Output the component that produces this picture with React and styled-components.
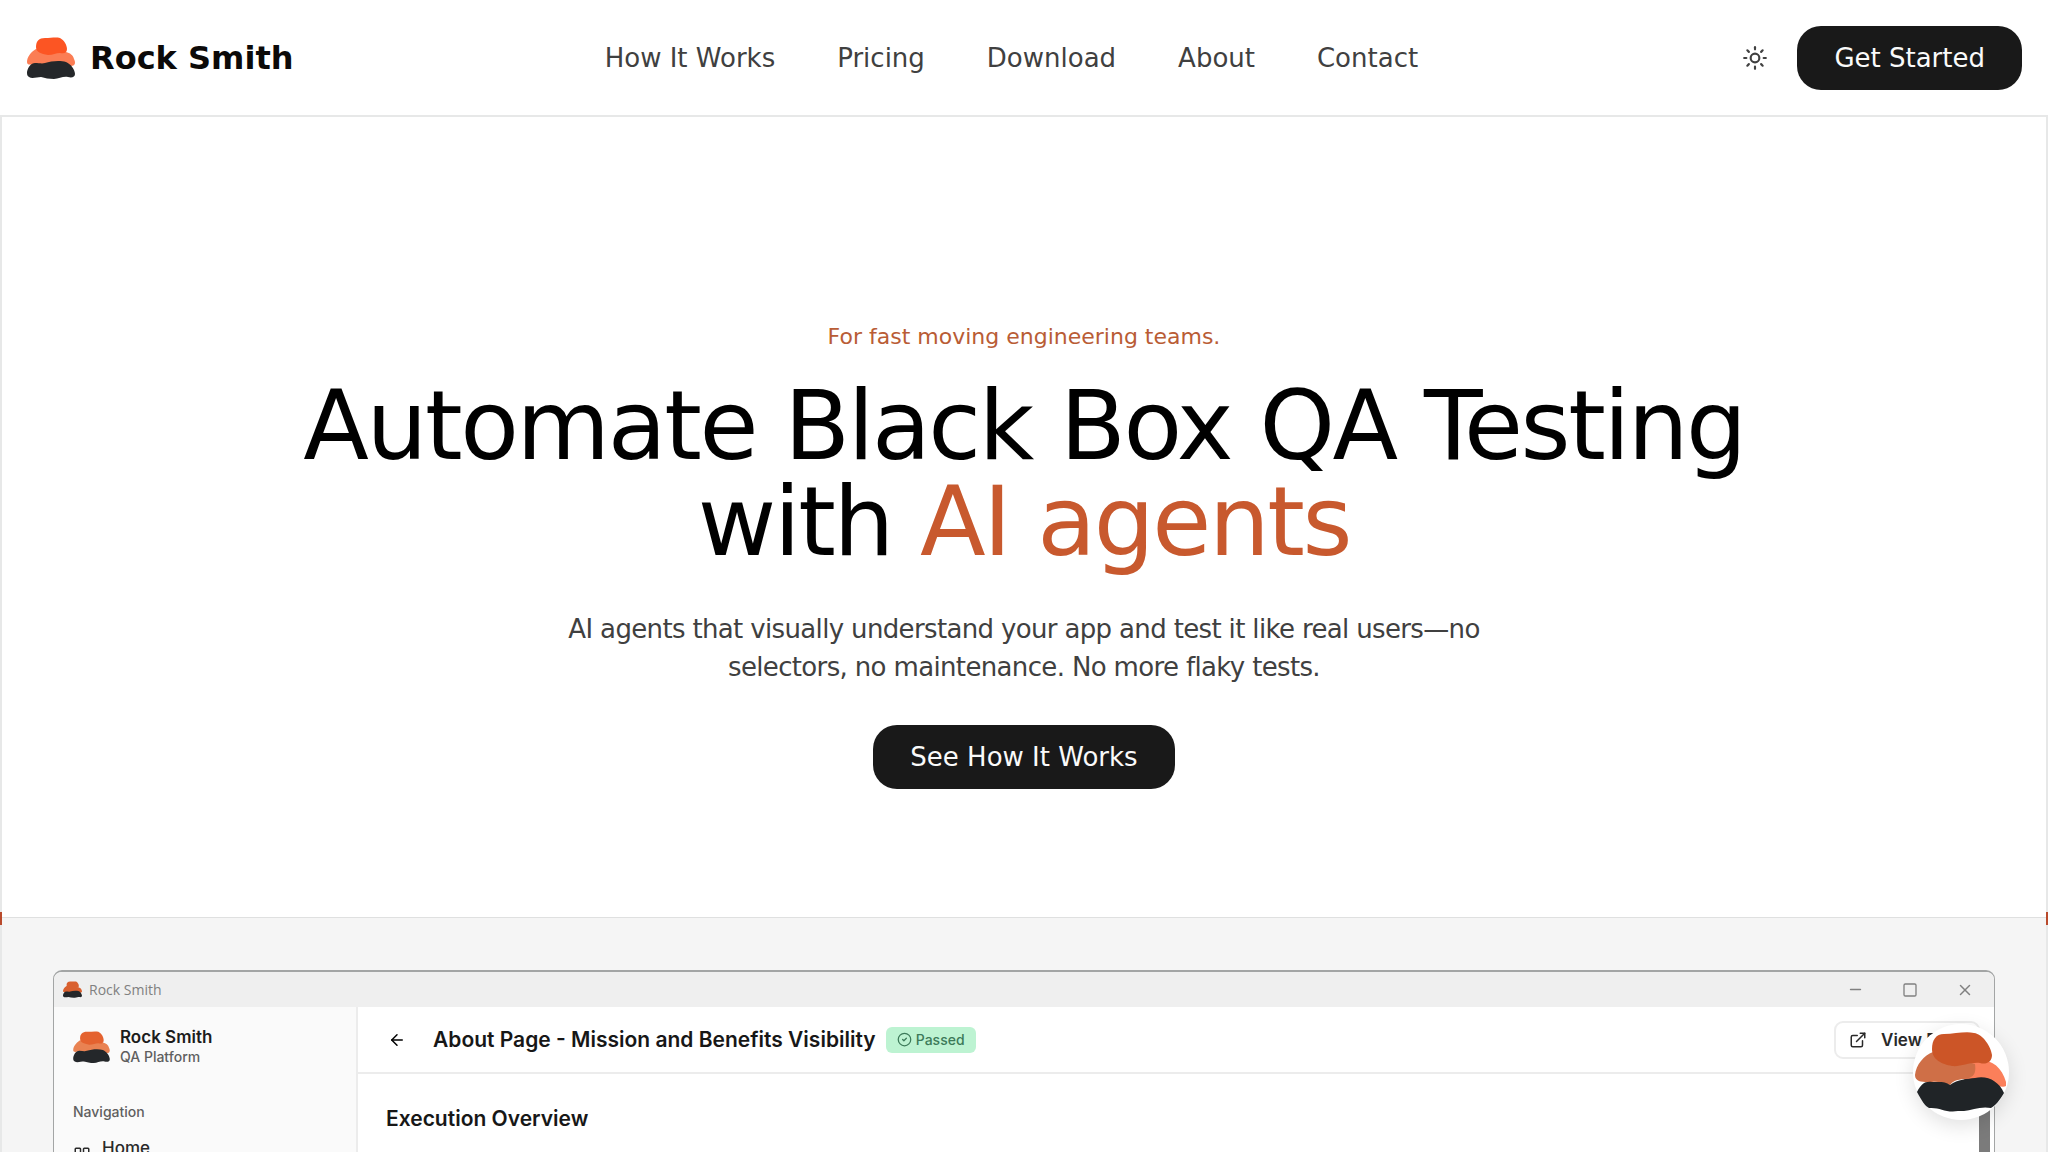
import styled, { createGlobalStyle } from 'styled-components';
import { Sun, ArrowLeft, CircleCheck, ExternalLink, LayoutGrid, Minus, Square, X } from 'lucide-react';

const GlobalStyle = createGlobalStyle`
    * {
        box-sizing: border-box;
    }

    body {
        margin: 0;
        background: #fff;
        color: #000;
        font-family: "DejaVu Sans", sans-serif;
    }

    h1, h2, p {
        margin: 0;
        font-weight: 400;
    }
`;

const Page = styled.div`
    display: flex;
    flex-direction: column;
    height: 100vh;
    overflow: hidden;
`;

const Header = styled.header`
    display: flex;
    align-items: center;
    justify-content: space-between;
    flex: none;
    height: 117px;
    padding: 0 26px;
    border-bottom: 2px solid #e7e8e8;
`;

const Brand = styled.a`
    display: flex;
    align-items: center;
    gap: 14px;
    color: #0c0a09;
    font-size: 32px;
    font-weight: 700;
    text-decoration: none;
`;

const Nav = styled.nav`
    display: flex;
    gap: 62px;
`;

const NavLink = styled.a`
    color: #404040;
    font-size: 26px;
    line-height: 38px;
    text-decoration: none;
`;

const Actions = styled.div`
    display: flex;
    align-items: center;
    gap: 16px;
`;

const IconButton = styled.button`
    display: flex;
    align-items: center;
    justify-content: center;
    width: 52px;
    height: 52px;
    padding: 0;
    border: none;
    background: none;
    color: #404040;
`;

const PrimaryButton = styled.button`
    height: 64px;
    padding: 0 37px;
    border: none;
    border-radius: 24px;
    background: #191919;
    color: #fafafa;
    font-family: inherit;
    font-size: 26px;
    line-height: 38px;
`;

const Main = styled.main`
    flex: 1;
    min-height: 0;
    border: solid #e7e8e8;
    border-width: 0 2px;
`;

const Hero = styled.section`
    display: flex;
    flex-direction: column;
    align-items: center;
    padding: 204px 32px 128px;
    text-align: center;
`;

const Eyebrow = styled.p`
    color: #b95c35;
    font-size: 22px;
    line-height: 32px;
`;

const Title = styled.h1`
    max-width: 1640px;
    margin-top: 25px;
    font-size: 96px;
    line-height: 96px;
    letter-spacing: -0.025em;
`;

const Accent = styled.span`
    color: #c8592e;
`;

const Lead = styled.p`
    max-width: 920px;
    margin: 40px 0 39px;
    color: #404040;
    font-size: 26px;
    line-height: 38px;
    letter-spacing: -0.025em;
`;

const Showcase = styled.section`
    position: relative;
    padding: 52px 51px;
    border-top: 1px solid #dfe0e0;
    background: #f5f5f5;
`;

const Tick = styled.span`
    position: absolute;
    top: -6px;
    ${({ $side }) => $side}: -2px;
    width: 2px;
    height: 13px;
    background: #b94a2c;
`;

const AppWindow = styled.div`
    overflow: hidden;
    border: 1px solid #a3a5a5;
    border-top-width: 2px;
    border-radius: 9px;
    background: #fff;
    font-family: Inter, sans-serif;
`;

const TitleBar = styled.div`
    display: flex;
    align-items: center;
    justify-content: space-between;
    height: 35px;
    padding: 0 20px 0 9px;
    background: #efefef;
    color: #808080;
`;

const WindowName = styled.div`
    display: flex;
    align-items: center;
    gap: 7px;
    font-family: "Open Sans", sans-serif;
    font-size: 14px;
`;

const WindowControls = styled.div`
    display: flex;
    align-items: center;
    gap: 38px;
`;

const AppBody = styled.div`
    display: flex;
    height: 900px;
`;

const Sidebar = styled.aside`
    flex: none;
    width: 304px;
    padding: 20px 19px;
    border-right: 2px solid #ececec;
    background: #fafafa;
`;

const Product = styled.div`
    display: flex;
    align-items: center;
    gap: 10px;
`;

const ProductName = styled.div`
    color: #1c1c1c;
    font-size: 17px;
    font-weight: 600;
    line-height: 20px;
`;

const ProductKind = styled.div`
    color: #5f5f5f;
    font-size: 14px;
    font-weight: 500;
    line-height: 20px;
`;

const GroupLabel = styled.div`
    margin: 35px 0 14px;
    color: #5f5f5f;
    font-size: 14px;
    font-weight: 500;
    line-height: 20px;
`;

const SidebarLink = styled.a`
    display: flex;
    align-items: flex-start;
    gap: 11px;
    color: #2a2a2a;
    font-size: 17px;
    font-weight: 500;
    line-height: 24px;
    text-decoration: none;

    svg {
        margin-top: 10px;
    }
`;

const Content = styled.div`
    flex: 1;
    min-width: 0;
`;

const ContentHeader = styled.div`
    display: flex;
    align-items: center;
    height: 67px;
    padding: 0 14px 0 30px;
    border-bottom: 2px solid #ececec;
`;

const ContentTitle = styled.h2`
    margin: 0 10px 0 27px;
    color: #171717;
    font-size: 21px;
    font-weight: 600;
    line-height: 30px;
`;

const Badge = styled.span`
    display: flex;
    align-items: center;
    gap: 4px;
    height: 26px;
    padding: 0 11px;
    border-radius: 6px;
    background: #bdf3d2;
    color: #3c7a59;
    font-size: 14px;
    font-weight: 500;
`;

const ViewButton = styled.button`
    display: flex;
    align-items: center;
    gap: 14px;
    height: 38px;
    margin-left: auto;
    padding: 0 13px;
    border: 2px solid #ececec;
    border-radius: 9px;
    background: #fff;
    color: #2a2a2a;
    font-family: inherit;
    font-size: 17px;
    font-weight: 600;
`;

const ContentBody = styled.div`
    display: flex;
    justify-content: space-between;
    height: 100%;
    padding-left: 28px;
`;

const Overview = styled.h2`
    margin-top: 30px;
    color: #171717;
    font-size: 21px;
    font-weight: 600;
    line-height: 30px;
`;

const ScrollThumb = styled.div`
    width: 11px;
    margin: 24px 4px 0 0;
    background: #7b7b7b;
`;

const ChatButton = styled.button`
    position: fixed;
    right: 39px;
    bottom: 32px;
    display: flex;
    align-items: center;
    justify-content: center;
    width: 96px;
    height: 96px;
    padding: 0;
    border: none;
    border-radius: 50%;
    background: #fff;
    box-shadow: 0 6px 20px rgba(0, 0, 0, 0.12);
`;

const links = ['How It Works', 'Pricing', 'Download', 'About', 'Contact'];

const Rocks = ({ width, height, top = '#fc5523', middle = '#fb7d54' }) => (
    <svg width={width} height={height} viewBox="0 0 48 42" aria-hidden="true">
        <path fill={middle} d="M9 12C4 15 0 20 0 25C0 28 3 28 6 27L44 29C48 29 49 26 47 22C46 18 43 16 39 15Z" />
        <path fill={top} d="M9 10C9 4 12 1 18 1C24 1 29 0 33 1C37 3 40 8 40 12C40 16 37 17 33 16C29 16 26 18 21 18C14 17 9 15 9 10Z" />
        <path fill="#24272a" d="M0 35C1 30 4 26 8 26C12 26 15 27 18 26C24 24 33 23 39 25C44 27 48 33 48 37C48 40 45 41 41 40C36 39 32 42 27 42C22 42 18 41 14 40C10 40 5 42 2 40C0 39 0 37 0 35Z" />
    </svg>
);

const ChatRocks = () => (
    <svg width="92" height="80" viewBox="0 0 92 80" aria-hidden="true">
        <path fill="#fb7f5a" d="M56 30C70 24 86 31 91 50L91 54C88 56 82 54 76 50L48 50Z" />
        <path fill="#cf6f47" d="M0 43C1 33 9 23 18 20L60 32C61 39 60 44 54 46C48 48 40 46 35 53C28 51 22 49 17 50C10 50 0 51 0 43Z" />
        <path fill="#cc5527" d="M17 17C17 8 21 2 29 2C40 2 50 -1 59 1C68 2 76 15 77 23C77 30 71 33 65 31C54 30 46 35 37 34C27 32 17 28 17 17Z" />
        <path fill="#202427" d="M2 60C6 52 10 49 17 50C24 50 30 49 35 53C43 47 52 47 60 46C72 43 84 49 89 61C85 68 80 74 76 76C66 74 57 78 49 79L43 79C30 81 25 75 14 76C10 74 7 69 2 60Z" />
    </svg>
);

const App = () => {
    return (
        <Page>
            <GlobalStyle />
            <Header>
                <Brand href="#">
                    <Rocks width={50} height={42} />
                    Rock Smith
                </Brand>
                <Nav>
                    {links.map((link) => <NavLink key={link} href="#">{link}</NavLink>)}
                </Nav>
                <Actions>
                    <IconButton aria-label="Toggle theme"><Sun size={26} strokeWidth={2} /></IconButton>
                    <PrimaryButton>Get Started</PrimaryButton>
                </Actions>
            </Header>
            <Main>
                <Hero>
                    <Eyebrow>For fast moving engineering teams.</Eyebrow>
                    <Title>Automate Black Box QA Testing with <Accent>AI agents</Accent></Title>
                    <Lead>AI agents that visually understand your app and test it like real users—no selectors, no maintenance. No more flaky tests.</Lead>
                    <PrimaryButton>See How It Works</PrimaryButton>
                </Hero>
                <Showcase>
                    <Tick $side="left" />
                    <Tick $side="right" />
                    <AppWindow>
                        <TitleBar>
                            <WindowName>
                                <Rocks width={19} height={17} top="#d9602f" middle="#d9602f" />
                                Rock Smith
                            </WindowName>
                            <WindowControls>
                                <Minus size={17} />
                                <Square size={16} />
                                <X size={18} />
                            </WindowControls>
                        </TitleBar>
                        <AppBody>
                            <Sidebar>
                                <Product>
                                    <Rocks width={37} height={32} top="#e4622f" middle="#e98252" />
                                    <div>
                                        <ProductName>Rock Smith</ProductName>
                                        <ProductKind>QA Platform</ProductKind>
                                    </div>
                                </Product>
                                <GroupLabel>Navigation</GroupLabel>
                                <SidebarLink href="#"><LayoutGrid size={18} />Home</SidebarLink>
                            </Sidebar>
                            <Content>
                                <ContentHeader>
                                    <ArrowLeft size={18} />
                                    <ContentTitle>About Page - Mission and Benefits Visibility</ContentTitle>
                                    <Badge><CircleCheck size={15} />Passed</Badge>
                                    <ViewButton><ExternalLink size={18} />View Flow</ViewButton>
                                </ContentHeader>
                                <ContentBody>
                                    <Overview>Execution Overview</Overview>
                                    <ScrollThumb />
                                </ContentBody>
                            </Content>
                        </AppBody>
                    </AppWindow>
                </Showcase>
            </Main>
            <ChatButton aria-label="Open chat"><ChatRocks /></ChatButton>
        </Page>
    );
};

export default App;
